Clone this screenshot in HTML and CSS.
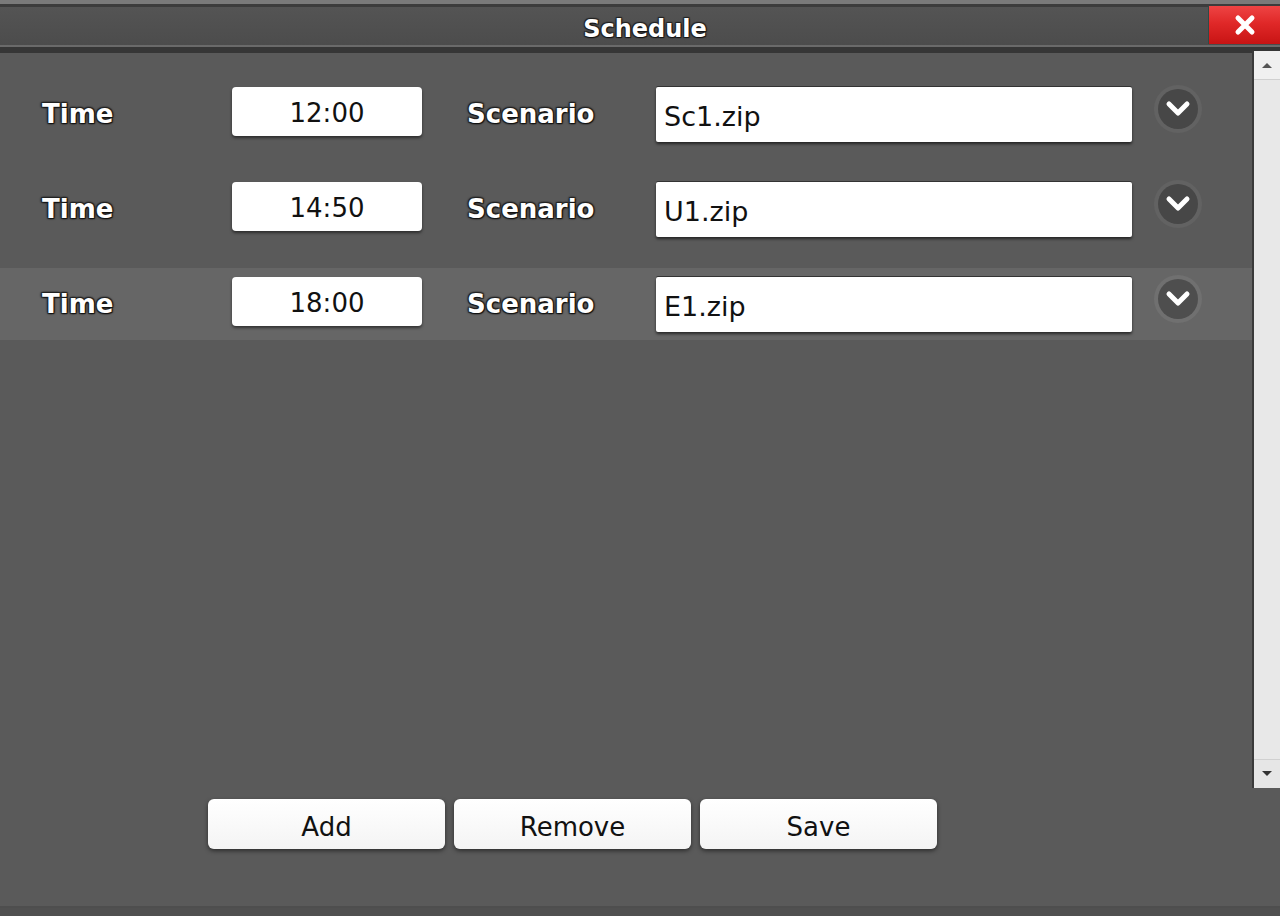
FILE: index.html
```html
<!DOCTYPE html>
<html>
<head>
<meta charset="utf-8">
<title>Schedule</title>
<link rel="stylesheet" href="styles.css">
</head>
<body>
<div class="dialog">
  <div class="topstrip"></div>
  <div class="titlebar">
    <div class="spacer"></div>
    <div class="title">Schedule</div>
    <div class="close-wrap">
      <button class="close" aria-label="Close">
        <svg width="24" height="24" viewBox="0 0 24 24"><path d="M5 5 L19 19 M19 5 L5 19" stroke="#fff" stroke-width="5" stroke-linecap="round"/></svg>
      </button>
    </div>
  </div>
  <div class="content">
    <div class="rows">
      <div class="row">
        <span class="label">Time</span>
        <div class="timebox">12:00</div>
        <span class="label scen">Scenario</span>
        <div class="scenbox">Sc1.zip</div>
        <span class="drop"><svg width="50" height="50" viewBox="0 0 50 50"><circle cx="25" cy="25" r="24" fill="#626262"/><circle cx="25" cy="25" r="20" fill="#474747"/><path d="M16 20 L25 29 L34 20" fill="none" stroke="#fff" stroke-width="5" stroke-linecap="round" stroke-linejoin="round"/></svg></span>
      </div>
      <div class="row">
        <span class="label">Time</span>
        <div class="timebox">14:50</div>
        <span class="label scen">Scenario</span>
        <div class="scenbox">U1.zip</div>
        <span class="drop"><svg width="50" height="50" viewBox="0 0 50 50"><circle cx="25" cy="25" r="24" fill="#626262"/><circle cx="25" cy="25" r="20" fill="#474747"/><path d="M16 20 L25 29 L34 20" fill="none" stroke="#fff" stroke-width="5" stroke-linecap="round" stroke-linejoin="round"/></svg></span>
      </div>
      <div class="row selected">
        <span class="label">Time</span>
        <div class="timebox">18:00</div>
        <span class="label scen">Scenario</span>
        <div class="scenbox">E1.zip</div>
        <span class="drop"><svg width="50" height="50" viewBox="0 0 50 50"><circle cx="25" cy="25" r="24" fill="#707070"/><circle cx="25" cy="25" r="20" fill="#4e4e4e"/><path d="M16 20 L25 29 L34 20" fill="none" stroke="#fff" stroke-width="5" stroke-linecap="round" stroke-linejoin="round"/></svg></span>
      </div>
    </div>
    <div class="scrollbar">
      <div class="arrow up"><svg width="12" height="8" viewBox="0 0 12 8"><path d="M1 7 L6 2 L11 7 Z" fill="#555"/></svg></div>
      <div class="track"></div>
      <div class="arrow down"><svg width="12" height="8" viewBox="0 0 12 8"><path d="M1 1 L6 6 L11 1 Z" fill="#333"/></svg></div>
    </div>
  </div>
  <div class="footer">
    <button class="btn">Add</button>
    <button class="btn">Remove</button>
    <button class="btn">Save</button>
  </div>
  <div class="bottomline"></div>
</div>
</body>
</html>
```

FILE: styles.css
```css
html, body {
  margin: 0;
  padding: 0;
  background: #5a5a5a;
}
body {
  font-family: "DejaVu Sans", Verdana, sans-serif;
}
.dialog {
  width: 1280px;
  height: 916px;
  display: flex;
  flex-direction: column;
  background: #5a5a5a;
  overflow: hidden;
}
.topstrip {
  height: 4px;
  background: #7a7a7a;
  border-bottom: 3px solid #3c3c3c;
}
.titlebar {
  height: 38px;
  display: grid;
  grid-template-columns: 1fr auto 1fr;
  align-items: center;
  background: linear-gradient(#545454, #4c4c4c);
  border-bottom: 2px solid #6a6a6a;
}
.title {
  color: #fff;
  font-weight: bold;
  font-size: 24px;
  padding-left: 10px;
  padding-top: 5px;
  text-shadow: 1px 1px 1px #111, -1px -1px 1px #222, 1px -1px 1px #222, -1px 1px 1px #222;
}
.close-wrap {
  display: flex;
  justify-content: flex-end;
  height: 100%;
}
.close {
  width: 72px;
  height: 38px;
  margin-top: -1px;
  border: none;
  border-left: 1px solid #2f4a46;
  background: linear-gradient(#ee4444 0%, #e02828 45%, #c81414 100%);
  display: flex;
  align-items: center;
  justify-content: center;
  padding: 0;
}
.content {
  height: 735px;
  display: flex;
  border-top: 6px solid #363636;
}
.rows {
  flex: 1;
  padding-top: 25px;
  display: flex;
  flex-direction: column;
  gap: 23px;
}
.row {
  height: 72px;
  display: flex;
  align-items: center;
  padding-left: 42px;
}
.row.selected {
  background: #666666;
}
.label {
  width: 190px;
  color: #fff;
  font-weight: bold;
  font-size: 26px;
  text-shadow: 1px 1px 1px #111, -1px -1px 1px #222, 1px -1px 1px #222, -1px 1px 1px #222, 0 0 3px #000;
}
.label.scen {
  width: 189px;
}
.timebox {
  width: 190px;
  height: 49px;
  margin-right: 45px;
  margin-top: -5px;
  padding-top: 3px;
  box-sizing: border-box;
  background: #fff;
  border-radius: 4px;
  box-shadow: 0 2px 3px rgba(0,0,0,0.5);
  display: flex;
  align-items: center;
  justify-content: center;
  font-size: 26px;
  color: #111;
}
.scenbox {
  width: 468px;
  padding-left: 8px;
  padding-top: 4px;
  box-sizing: content-box;
  height: 51px;
  background: #fff;
  border-radius: 2px;
  box-shadow: 0 -1px 0 #333, 0 2px 3px rgba(0,0,0,0.6);
  display: flex;
  align-items: center;
  font-size: 27px;
  color: #111;
}
.drop {
  width: 50px;
  height: 50px;
  margin-left: 21px;
  margin-top: -10px;
  display: block;
}
.drop svg {
  display: block;
}
.scrollbar {
  width: 26px;
  margin-top: -2px;
  background: #ebebeb;
  border-left: 2px solid #3a3a3a;
  display: flex;
  flex-direction: column;
  box-shadow: inset 2px 0 0 #fafafa;
}
.arrow {
  height: 28px;
  display: flex;
  align-items: center;
  justify-content: center;
  background: #f0f0f0;
  border-bottom: 1px solid #d0d0d0;
}
.arrow.down {
  border-bottom: none;
  border-top: 1px solid #d0d0d0;
  background: #e6e6e6;
}
.track {
  flex: 1;
  background: #e8e8e8;
}
.footer {
  flex: 1;
  display: flex;
  gap: 9px;
  padding-left: 208px;
  padding-top: 11px;
  align-items: flex-start;
}
.btn {
  width: 237px;
  height: 50px;
  background: linear-gradient(#ffffff, #f4f4f4);
  border: none;
  border-radius: 6px;
  box-shadow: 0 2px 4px rgba(0,0,0,0.5);
  font-family: "DejaVu Sans", Verdana, sans-serif;
  font-size: 26px;
  color: #111;
  padding: 6px 0 0 0;
}
.bottomline {
  height: 8px;
  border-top: 2px solid #4e4e4e;
  background: #505050;
}
```
